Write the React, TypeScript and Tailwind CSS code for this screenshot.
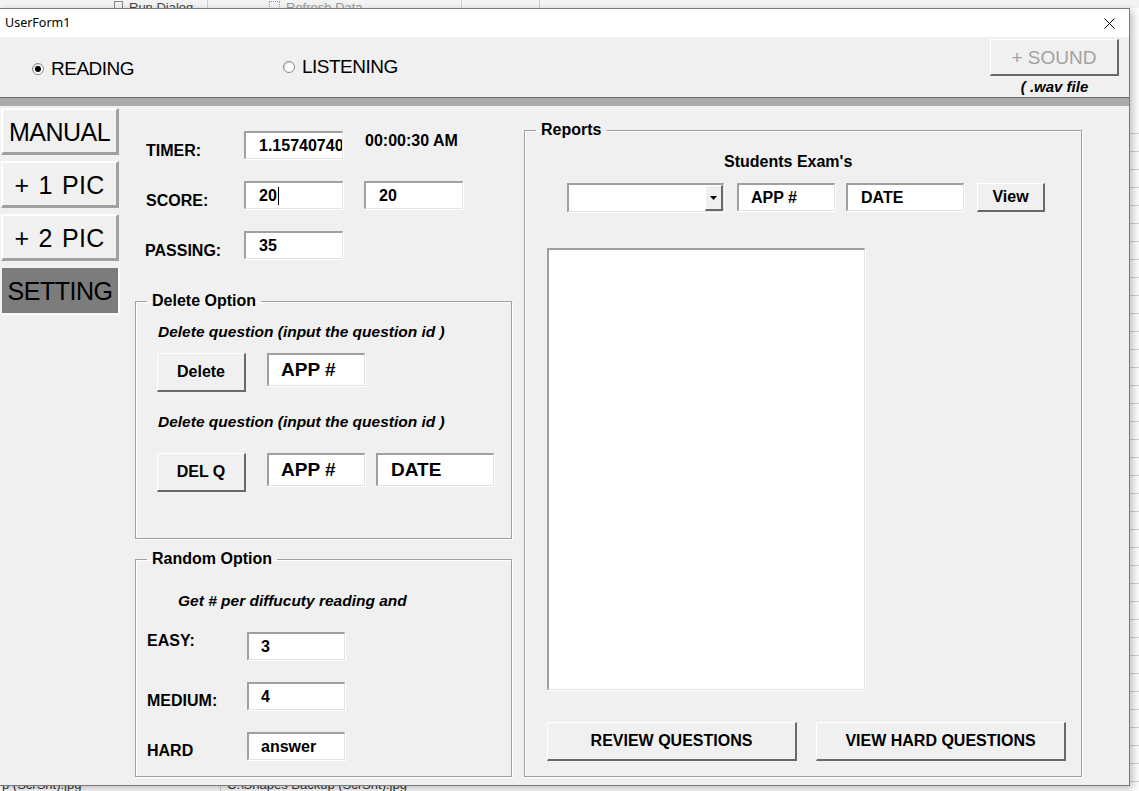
import React from "react";

const raised =
  "bg-[#f0f0f0] border-t border-l border-t-white border-l-white border-b-2 border-r-2 border-b-[#696969] border-r-[#696969]";
const sunken =
  "bg-white border-t-2 border-l-2 border-t-[#a0a0a0] border-l-[#a0a0a0] border-b border-r border-b-[#e3e3e3] border-r-[#e3e3e3] shadow-[1px_1px_0_#ffffff]";

function Field({
  className,
  children,
}: {
  className: string;
  children?: React.ReactNode;
}) {
  return (
    <div
      className={`${sunken} ${className} flex items-center overflow-hidden whitespace-nowrap font-bold text-black`}
    >
      {children}
    </div>
  );
}

function Button({
  className,
  children,
}: {
  className: string;
  children: React.ReactNode;
}) {
  return (
    <button
      className={`${raised} ${className} flex items-center justify-center text-[16px] font-bold text-black`}
    >
      {children}
    </button>
  );
}

function Radio({ label, checked }: { label: string; checked?: boolean }) {
  return (
    <div className="flex h-[22px] items-center gap-[7px]">
      <span className="flex h-[12px] w-[12px] items-center justify-center rounded-full border border-[#8a8a8a] bg-white shadow-[inset_1px_1px_1px_rgba(0,0,0,0.15)]">
        {checked && <span className="h-[6px] w-[6px] rounded-full bg-black" />}
      </span>
      <span className="text-[19px] leading-[22px] tracking-[-0.5px] text-black">{label}</span>
    </div>
  );
}

function Frame({
  title,
  className,
  children,
}: {
  title: string;
  className: string;
  children: React.ReactNode;
}) {
  return (
    <fieldset
      className={`border border-[#a0a0a0] shadow-[inset_1px_1px_0_#ffffff,1px_1px_0_#ffffff] ${className}`}
    >
      <legend className="ml-[11px] px-[5px] text-[16px] font-bold leading-[18px] text-black">
        {title}
      </legend>
      {children}
    </fieldset>
  );
}

function SideButton({ label, active, wide }: { label: string; active?: boolean; wide?: boolean }) {
  return (
    <button
      className={`ml-[1px] flex h-[47px] w-[118px] items-center justify-center pt-[3px] text-[25px] text-black ${
        wide ? "tracking-[0.3px] [word-spacing:2px]" : "tracking-[-0.5px]"
      } ${
        active
          ? "border border-[#f4f4f4] bg-[#7c7c7c] shadow-[1px_1px_0_#ffffff]"
          : "border-t-2 border-l-2 border-t-white border-l-white border-b-[3px] border-r-[3px] border-b-[#a0a0a0] border-r-[#a0a0a0] bg-[#f0f0f0]"
      }`}
    >
      {label}
    </button>
  );
}

const gridRows = Array.from({ length: 40 }, (_, i) => i);

export default function App() {
  return (
    <div className="flex h-[791px] w-[1139px] flex-col overflow-hidden bg-white font-['Liberation_Sans',Arial,sans-serif]">
      {/* excel ribbon behind the form */}
      <div className="flex h-[8px] shrink-0 overflow-hidden bg-[#f3f3f3] text-[13px] leading-[16px] text-[#444]">
        <div className="w-[114px]" />
        <div className="mt-[1px] h-[10px] w-[9px] border border-[#888]" />
        <div className="ml-[6px] w-[78px]">Run Dialog</div>
        <div className="w-px bg-[#d0d0d0]" />
        <div className="w-[61px]" />
        <div className="mt-[1px] h-[10px] w-[11px] border border-dotted border-[#999]" />
        <div className="ml-[6px] w-[175px] text-[#9a9a9a]">Refresh Data</div>
        <div className="w-px bg-[#d0d0d0]" />
        <div className="w-[77px]" />
        <div className="w-px bg-[#d0d0d0]" />
      </div>

      <div className="flex h-[778px] shrink-0">
        {/* the user form window */}
        <div className="z-10 flex w-[1130px] shrink-0 flex-col border-t border-r border-b border-[#7a7a7a] shadow-[3px_3px_8px_rgba(0,0,0,0.25)]">
          <div className="flex h-[28px] shrink-0 items-center justify-between bg-white pl-[5px] pr-[14px] font-['Noto_Sans',sans-serif] text-[12.5px] text-black">
            <span>UserForm1</span>
            <svg width="11" height="11" viewBox="0 0 11 11">
              <path d="M0.5 0.5 L10.5 10.5 M10.5 0.5 L0.5 10.5" stroke="#000" strokeWidth="1" />
            </svg>
          </div>

          <div className="flex flex-1 flex-col bg-[#f0f0f0]">
            {/* top bar */}
            <div className="flex h-[60px] shrink-0">
              <div className="mt-[21px] w-[283px] pl-[32px]">
                <Radio label="READING" checked />
              </div>
              <div className="mt-[19px]">
                <Radio label="LISTENING" />
              </div>
              <div className="flex-1" />
              <div className="mr-[10px] mt-[2px] flex w-[129px] flex-col items-center">
                <button
                  className={`${raised} flex h-[37px] w-[129px] items-center justify-center pt-[3px] text-[19px] text-[#a3a3a3]`}
                >
                  + SOUND
                </button>
                <span className="mt-[2px] text-[15px] font-bold italic leading-[17px] text-black">
                  ( .wav file
                </span>
              </div>
            </div>

            <div className="h-[9px] shrink-0 border-t border-[#6d6d6d] bg-[#ababab]" />

            <div className="flex flex-1">
              {/* side buttons */}
              <div className="flex w-[120px] shrink-0 flex-col gap-[6px] pt-[2px]">
                <SideButton label="MANUAL" />
                <SideButton label="+ 1 PIC" wide />
                <SideButton label="+ 2 PIC" wide />
                <SideButton label="SETTING" active />
              </div>

              {/* settings column */}
              <div className="ml-[15px] flex w-[377px] shrink-0 flex-col pt-[25px] text-[16px] text-black">
                <div className="flex h-[50px] items-start">
                  <span className="w-[109px] pl-[11px] pt-[11px] font-bold leading-[18px]">TIMER:</span>
                  <Field className="h-[28px] w-[99px] pl-[13px] text-[16px]">1.1574074074</Field>
                  <span className="ml-[22px] pt-[1px] font-bold leading-[18px]">00:00:30 AM</span>
                </div>
                <div className="flex h-[50px] items-start">
                  <span className="w-[109px] pl-[11px] pt-[11px] font-bold leading-[18px]">SCORE:</span>
                  <Field className="h-[28px] w-[99px] pl-[13px] text-[16px]">
                    20
                    <span className="ml-[1px] h-[18px] w-px bg-black" />
                  </Field>
                  <Field className="ml-[21px] h-[28px] w-[99px] pl-[13px] text-[16px]">20</Field>
                </div>
                <div className="flex h-[50px] items-start">
                  <span className="w-[109px] pl-[10px] pt-[11px] font-bold leading-[18px]">PASSING:</span>
                  <Field className="h-[28px] w-[99px] pl-[13px] text-[16px]">35</Field>
                </div>

                <Frame title="Delete Option" className="mt-[11px] h-[247px]">
                  <p className="mt-[13px] pl-[22px] text-[15.5px] font-bold italic leading-[18px]">
                    Delete question (input the question id )
                  </p>
                  <div className="mt-[12px] flex items-start pl-[21px]">
                    <Button className="h-[39px] w-[89px]">Delete</Button>
                    <Field className="ml-[21px] h-[33px] w-[98px] pl-[12px] text-[19px]">APP #</Field>
                  </div>
                  <p className="mt-[21px] pl-[22px] text-[15.5px] font-bold italic leading-[18px]">
                    Delete question (input the question id )
                  </p>
                  <div className="mt-[22px] flex items-start pl-[21px]">
                    <Button className="h-[39px] w-[89px]">DEL Q</Button>
                    <Field className="ml-[21px] h-[33px] w-[98px] pl-[12px] text-[19px]">APP #</Field>
                    <Field className="ml-[11px] h-[33px] w-[118px] pl-[13px] text-[19px]">DATE</Field>
                  </div>
                </Frame>

                <Frame title="Random Option" className="mt-[11px] h-[227px]">
                  <p className="mt-[24px] pl-[42px] text-[15.5px] font-bold italic leading-[18px]">
                    Get # per diffucuty reading and
                  </p>
                  <div className="mt-[22px] flex h-[50px] items-start">
                    <span className="w-[111px] pl-[11px] font-bold leading-[18px]">EASY:</span>
                    <Field className="h-[28px] w-[98px] pl-[12px] text-[16px]">3</Field>
                  </div>
                  <div className="flex h-[50px] items-start">
                    <span className="w-[111px] pl-[11px] pt-[10px] font-bold leading-[18px]">MEDIUM:</span>
                    <Field className="h-[28px] w-[98px] pl-[12px] text-[16px]">4</Field>
                  </div>
                  <div className="flex h-[50px] items-start">
                    <span className="w-[111px] pl-[11px] pt-[10px] font-bold leading-[18px]">HARD</span>
                    <Field className="h-[28px] w-[98px] pl-[12px] text-[16px]">answer</Field>
                  </div>
                </Frame>
              </div>

              {/* reports */}
              <Frame title="Reports" className="ml-[12px] mt-[15px] h-[656px] w-[558px] shrink-0">
                <p className="mt-[14px] pl-[199px] text-[16px] font-bold leading-[18px] text-black">
                  Students Exam&apos;s
                </p>
                <div className="mt-[12px] flex items-start pl-[42px]">
                  <div className={`${sunken} flex h-[29px] w-[157px] justify-end`}>
                    <div className={`${raised} flex h-full w-[18px] items-center justify-center`}>
                      <svg width="7" height="4" viewBox="0 0 7 4">
                        <path d="M0 0 H7 L3.5 4 Z" fill="#000" />
                      </svg>
                    </div>
                  </div>
                  <Field className="ml-[13px] h-[28px] w-[98px] pl-[12px] text-[16px]">APP #</Field>
                  <Field className="ml-[11px] h-[28px] w-[118px] pl-[13px] text-[16px]">DATE</Field>
                  <Button className="ml-[13px] h-[29px] w-[68px]">View</Button>
                </div>
                <div className={`${sunken} ml-[22px] mt-[36px] h-[442px] w-[318px]`} />
                <div className="mt-[32px] flex gap-[19px] pl-[22px]">
                  <Button className="h-[39px] w-[250px]">REVIEW QUESTIONS</Button>
                  <Button className="h-[39px] w-[250px]">VIEW HARD QUESTIONS</Button>
                </div>
              </Frame>
            </div>
          </div>
        </div>

        {/* excel grid showing at the right */}
        <div className="flex flex-1 flex-col bg-white pt-[108px]">
          {gridRows.map((r) => (
            <div key={r} className="h-[18px] shrink-0 border-b border-[#d4d4d4]" />
          ))}
        </div>
      </div>

      {/* excel cells below the form */}
      <div className="flex h-[5px] shrink-0 overflow-hidden bg-white text-[13px] leading-[14px] text-[#333]">
        <div className="-mt-[8px] w-[220px] pl-[2px]">p (ScrSht).jpg</div>
        <div className="w-px bg-[#d4d4d4]" />
        <div className="-mt-[8px] pl-[6px]">C:\Shapes Backup (ScrSht).jpg</div>
      </div>
    </div>
  );
}
